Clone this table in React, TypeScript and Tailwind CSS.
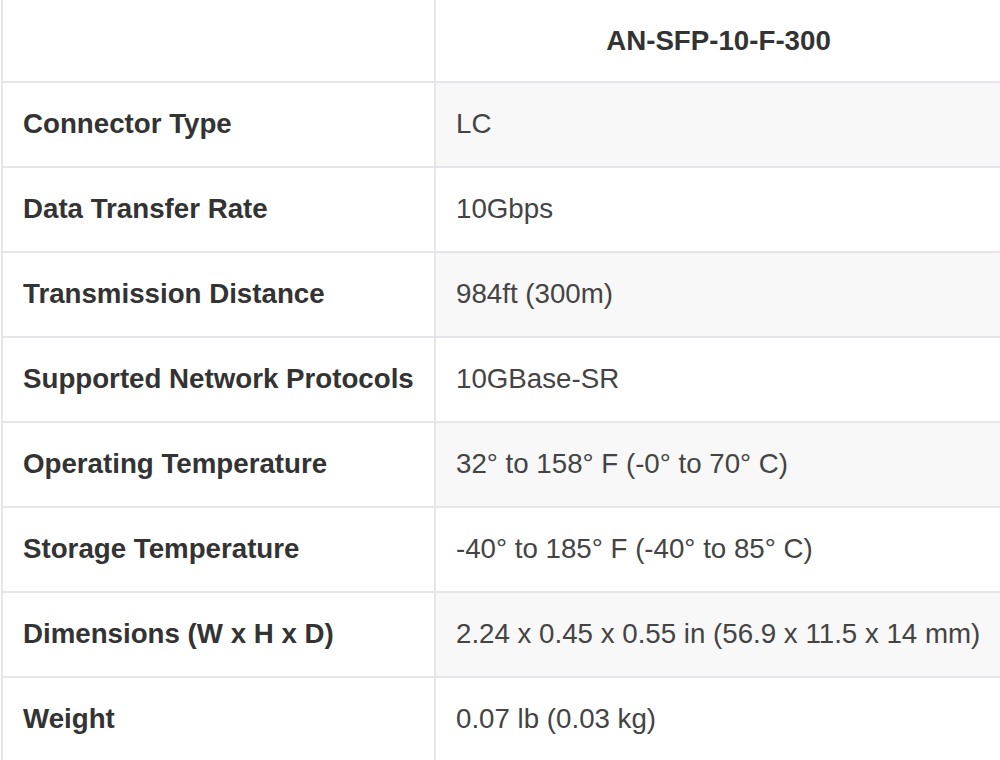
const specs: { label: string; value: string }[] = [
  { label: "Connector Type", value: "LC" },
  { label: "Data Transfer Rate", value: "10Gbps" },
  { label: "Transmission Distance", value: "984ft (300m)" },
  { label: "Supported Network Protocols", value: "10GBase-SR" },
  { label: "Operating Temperature", value: "32° to 158° F (-0° to 70° C)" },
  { label: "Storage Temperature", value: "-40° to 185° F (-40° to 85° C)" },
  { label: "Dimensions (W x H x D)", value: "2.24 x 0.45 x 0.55 in (56.9 x 11.5 x 14 mm)" },
  { label: "Weight", value: "0.07 lb (0.03 kg)" },
];

export default function App() {
  return (
    <div
      className="w-[1000px] h-[760px] overflow-hidden bg-white text-[#333] text-[27.7px] leading-none"
      style={{ fontFamily: '"Liberation Sans", Arial, sans-serif' }}
    >
      <div className="ml-px w-[1010px] border-l-2 border-[#e7e5ea]">
        <div className="grid grid-cols-[433px_1fr]">
          <div className="h-[83px] border-r-2 border-b-2 border-[#e7e5ea]" />
          <div className="h-[83px] flex items-center justify-center pr-[10px] border-b-2 border-[#e7e5ea] font-bold">
            AN-SFP-10-F-300
          </div>
        </div>
        {specs.map((s, i) => (
          <div key={s.label} className="grid grid-cols-[433px_1fr]">
            <div className="h-[85px] flex items-center px-5 pb-[2px] border-r-2 border-b-2 border-[#e7e5ea] font-bold whitespace-nowrap">
              {s.label}
            </div>
            <div
              className={
                i % 2 === 0
                  ? "h-[85px] flex items-center px-5 pb-[2px] border-b-2 border-[#e7e5ea] bg-[#f8f8f8] text-[#444] whitespace-nowrap"
                  : "h-[85px] flex items-center px-5 pb-[2px] border-b-2 border-[#e7e5ea] text-[#444] whitespace-nowrap"
              }
            >
              {s.value}
            </div>
          </div>
        ))}
      </div>
    </div>
  );
}
